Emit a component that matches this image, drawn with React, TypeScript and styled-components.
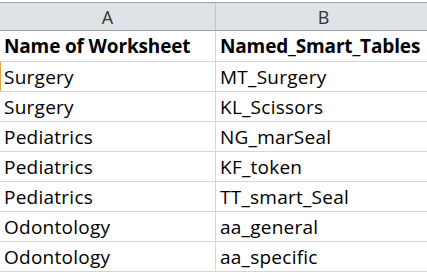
import React from "react";
import styled, { createGlobalStyle } from "styled-components";

const Global = createGlobalStyle`
  html, body { margin: 0; padding: 0; background: #ffffff; }
  body { font-family: "Open Sans", "Liberation Sans", sans-serif; }
`;

const Sheet = styled.div`
  width: 427px;
  height: 275px;
  overflow: hidden;
  padding-top: 2px;
  box-sizing: border-box;
  background: #ffffff;
`;

const Grid = styled.div`
  display: grid;
  grid-template-columns: 216px 216px;
  border-top: 1px solid #9fa3a8;
`;

const HeadCell = styled.div`
  height: 27px;
  background: #dfe3e8;
  border-bottom: 1px solid #9fa3a8;
  border-right: 1px solid #c0c4c9;
  display: flex;
  align-items: center;
  justify-content: center;
  font-family: "Open Sans", "Liberation Sans", sans-serif;
  font-size: 18px;
  color: #333333;
  box-sizing: content-box;
`;

const Cell = styled.div<{ $first?: boolean; $bold?: boolean; $mark?: boolean }>`
  height: ${(p) => (p.$first ? 30 : 29)}px;
  border-bottom: 1px solid #d4d4d4;
  border-right: 1px solid #d4d4d4;
  padding-left: 4px;
  display: flex;
  align-items: center;
  font-family: "Open Sans", "Liberation Sans", sans-serif;
  font-size: 19px;
  font-weight: ${(p) => (p.$bold ? 700 : 400)};
  letter-spacing: ${(p) => (p.$bold ? "-0.15px" : "0.25px")};
  color: #000000;
  white-space: nowrap;
  box-sizing: content-box;
  box-shadow: ${(p) => (p.$mark ? "inset 1px 0 0 #e8a33d" : "none")};
`;

const rows: [string, string][] = [
  ["Surgery", "MT_Surgery"],
  ["Surgery", "KL_Scissors"],
  ["Pediatrics", "NG_marSeal"],
  ["Pediatrics", "KF_token"],
  ["Pediatrics", "TT_smart_Seal"],
  ["Odontology", "aa_general"],
  ["Odontology", "aa_specific"],
];

export default function App() {
  return (
    <>
      <Global />
      <Sheet>
        <Grid>
          <HeadCell>A</HeadCell>
          <HeadCell>B</HeadCell>
          <Cell $first $bold>Name of Worksheet</Cell>
          <Cell $first $bold>Named_Smart_Tables</Cell>
          {rows.map(([a, b], i) => (
            <React.Fragment key={i}>
              <Cell $mark={i === 0}>{a}</Cell>
              <Cell>{b}</Cell>
            </React.Fragment>
          ))}
        </Grid>
      </Sheet>
    </>
  );
}
